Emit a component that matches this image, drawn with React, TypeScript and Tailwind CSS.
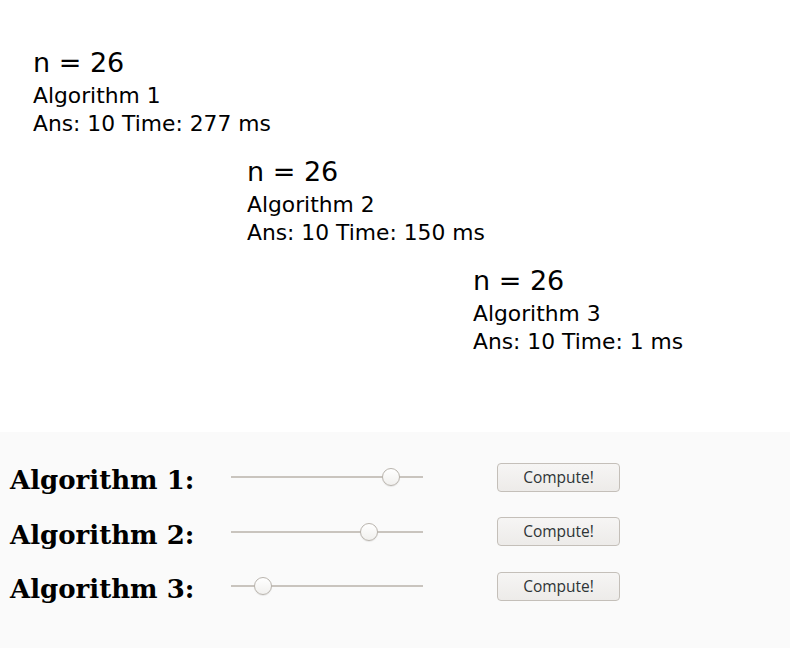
const results = [
  { algo: 1, n: 26, ans: 10, time: 277, indent: "pl-[33px]" },
  { algo: 2, n: 26, ans: 10, time: 150, indent: "pl-[247px]" },
  { algo: 3, n: 26, ans: 10, time: 1, indent: "pl-[473px]" },
];

const controls = [
  { algo: 1, value: 0.868 },
  { algo: 2, value: 0.741 },
  { algo: 3, value: 0.132 },
];

function Slider({ value }: { value: number }) {
  return (
    <div className="relative h-[18px] w-[192px]">
      <div className="absolute left-0 right-0 top-[8px] h-[2px] bg-[#c9c4be]" />
      <div
        className="absolute top-0 h-[18px] w-[18px] rounded-full border border-[#b9b4ad] bg-gradient-to-b from-white to-[#f1f0ee] shadow-[0_1px_1px_rgba(0,0,0,0.08)]"
        style={{ left: `${value * 174}px` }}
      />
    </div>
  );
}

export default function App() {
  return (
    <main className="flex h-[648px] w-[790px] flex-col bg-white text-black font-['DejaVu_Sans',sans-serif]">
      <div className="flex flex-col gap-[15px] pt-[44px]">
        {results.map((r) => (
          <div key={r.algo} className={`flex flex-col ${r.indent}`}>
            <div className="text-[27px] leading-[38px]">n = {r.n}</div>
            <div className="text-[21.8px] leading-[28px]">Algorithm {r.algo}</div>
            <div className="text-[21.8px] leading-[28px]">
              Ans: {r.ans} Time: {r.time} ms
            </div>
          </div>
        ))}
      </div>

      <div className="mt-auto flex h-[216px] flex-col bg-[#fafafa] pt-[18px]">
        {controls.map((c) => (
          <div key={c.algo} className="flex h-[54.5px] items-center">
            <div className="w-[231px] pl-[10px] pt-[6px] font-['DejaVu_Serif',serif] text-[26px] font-bold leading-[28px]">
              Algorithm {c.algo}:
            </div>
            <Slider value={c.value} />
            <button
              type="button"
              className="ml-[74px] h-[29px] w-[123px] rounded-[4px] border border-[#c4bfb9] bg-gradient-to-b from-[#f6f5f4] to-[#edebe9] text-[15.5px] text-[#2e3436] font-['Open_Sans',sans-serif]"
            >
              Compute!
            </button>
          </div>
        ))}
      </div>
    </main>
  );
}
